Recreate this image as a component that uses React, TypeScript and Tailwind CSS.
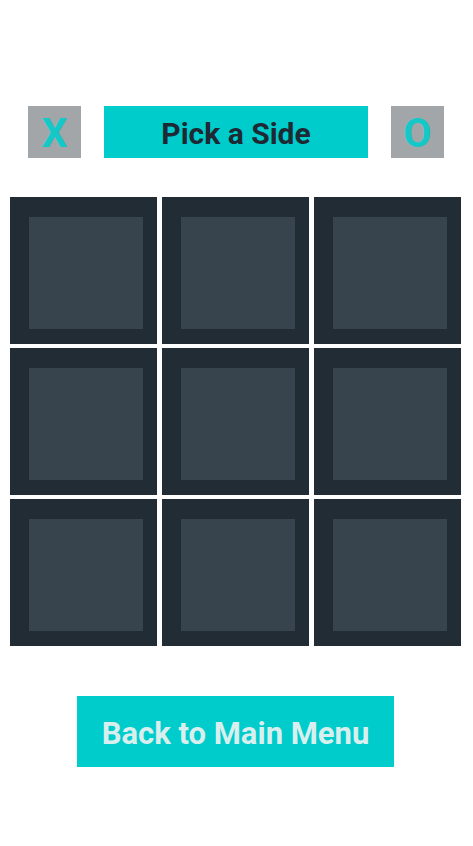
export default function App() {
  const cells = Array.from({ length: 9 });

  return (
    <div className="w-[473px] h-[846px] bg-white flex flex-col" style={{ fontFamily: "Roboto, 'Liberation Sans', sans-serif" }}>
      {/* side picker */}
      <div className="mt-[106px] ml-[28px] flex gap-[23px] h-[52px]">
        <button className="w-[53px] h-[52px] bg-[#a3a6a9] text-[#14c8c8] text-[41px] font-bold leading-none flex items-center justify-center pt-[2px]">
          X
        </button>
        <div className="w-[264px] h-[52px] bg-[#00cccc] text-[#1e2a33] text-[30px] font-bold leading-none flex items-center justify-center pt-[3px]">
          Pick a Side
        </div>
        <button className="w-[53px] h-[52px] bg-[#a3a6a9] text-[#14c8c8] text-[41px] font-bold leading-none flex items-center justify-center pt-[2px]">
          O
        </button>
      </div>

      {/* board */}
      <div className="mt-[39px] ml-[10px] grid grid-cols-[147px_147px_147px] auto-rows-[147px] gap-x-[5px] gap-y-[4px]">
        {cells.map((_, i) => (
          <div key={i} className="bg-[#222c35] pl-[19px] pt-[20px]">
            <div className="w-[114px] h-[112px] bg-[#37444d]" />
          </div>
        ))}
      </div>

      {/* back */}
      <button className="mt-[50px] ml-[77px] w-[317px] h-[71px] bg-[#00cccc] text-[#d8efee] text-[31px] font-bold leading-none flex items-center justify-center pt-[3px]">
        Back to Main Menu
      </button>
    </div>
  );
}
